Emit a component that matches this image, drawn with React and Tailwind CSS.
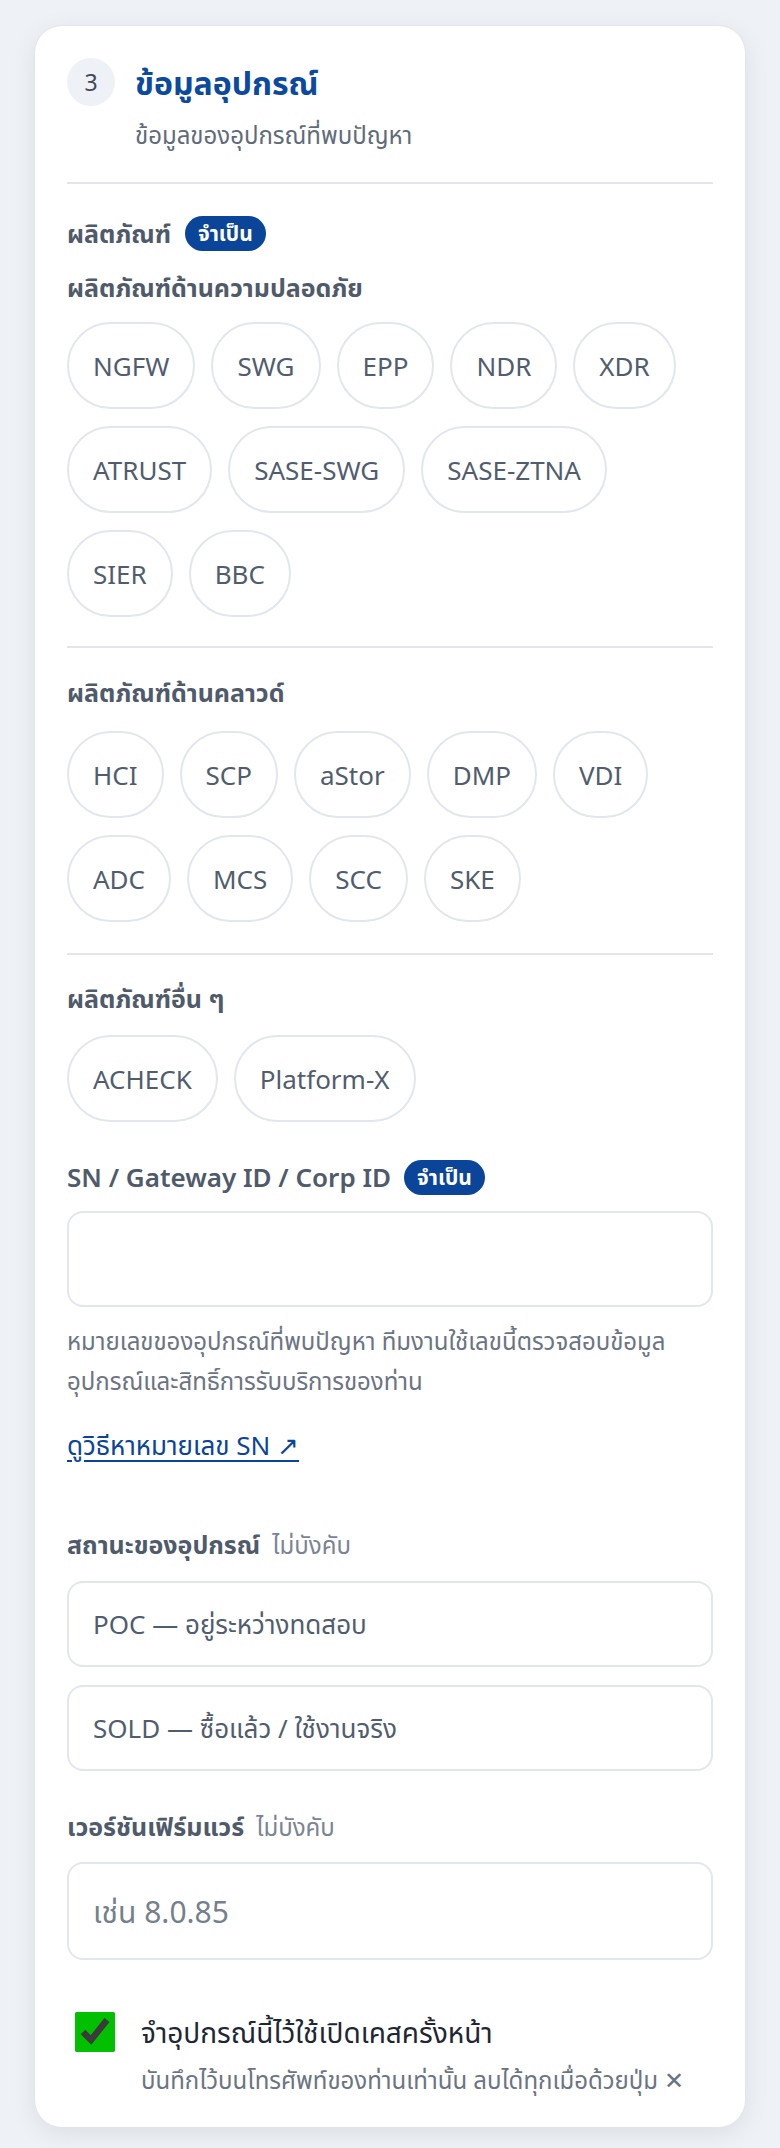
import { useState } from "react";

const SECURITY = ["NGFW", "SWG", "EPP", "NDR", "XDR", "ATRUST", "SASE-SWG", "SASE-ZTNA", "SIER", "BBC"];
const CLOUD = ["HCI", "SCP", "aStor", "DMP", "VDI", "ADC", "MCS", "SCC", "SKE"];
const OTHER = ["ACHECK", "Platform-X"];

function Badge() {
  return (
    <span className="inline-flex items-center h-[35px] px-[13px] rounded-full bg-[#0b4599] text-white text-[21px] font-bold leading-none">
      จำเป็น
    </span>
  );
}

function Chips({ items, selected, onToggle }) {
  return (
    <div className="flex flex-wrap gap-x-4 gap-y-[17px]">
      {items.map((name) => (
        <button
          key={name}
          onClick={() => onToggle(name)}
          className={
            "h-[87px] px-6 rounded-full border-2 text-[26px] leading-none " +
            (selected === name
              ? "border-[#0b4599] bg-[#eaf1fb] text-[#0b4599]"
              : "border-[#e2e7ee] bg-white text-[#515d6e]")
          }
        >
          {name}
        </button>
      ))}
    </div>
  );
}

export default function App() {
  const [product, setProduct] = useState(null);
  const [status, setStatus] = useState(null);
  const [remember, setRemember] = useState(true);

  return (
    <div
      className="min-h-screen bg-[#eef1f5] px-[34px] pt-[25px] pb-6"
      style={{ fontFamily: '"Noto Sans", "Noto Sans Thai", sans-serif' }}
    >
      <div className="bg-white rounded-[28px] border border-[#e1e5eb] shadow-[0_6px_24px_rgba(15,23,42,0.08)] px-8 pt-8 pb-[31px]">
        {/* Header */}
        <div className="flex gap-5">
          <div className="w-12 h-12 shrink-0 rounded-full bg-[#eef1f5] flex items-center justify-center text-[23px] text-[#3f4a5a]">
            3
          </div>
          <div>
            <h2 className="text-[32px] font-bold text-[#0b4a9e] leading-[44px] mt-[3px]">ข้อมูลอุปกรณ์</h2>
            <p className="text-[24px] text-[#5f6b7a] leading-[34px] mt-[13px]">ข้อมูลของอุปกรณ์ที่พบปัญหา</p>
          </div>
        </div>

        <div className="border-t-2 border-[#e2e6eb] mt-[30px] mb-[31px]" />

        {/* Products */}
        <div className="flex items-center gap-[14px]">
          <span className="text-[25px] font-bold text-[#4f5a6a] leading-[36px]">ผลิตภัณฑ์</span>
          <Badge />
        </div>
        <div className="text-[25px] font-bold text-[#4f5a6a] leading-[36px] mt-[18px] mb-[17px]">ผลิตภัณฑ์ด้านความปลอดภัย</div>
        <Chips items={SECURITY} selected={product} onToggle={setProduct} />

        <div className="border-t-2 border-[#e2e6eb] mt-[29px] mb-[26px]" />

        <div className="text-[25px] font-bold text-[#4f5a6a] leading-[36px] mb-[21px]">ผลิตภัณฑ์ด้านคลาวด์</div>
        <Chips items={CLOUD} selected={product} onToggle={setProduct} />

        <div className="border-t-2 border-[#e2e6eb] mt-[31px] mb-[25px]" />

        <div className="text-[25px] font-bold text-[#4f5a6a] leading-[36px] mb-[19px]">ผลิตภัณฑ์อื่น ๆ</div>
        <Chips items={OTHER} selected={product} onToggle={setProduct} />

        {/* SN */}
        <div className="flex items-center gap-[13px] mt-[37px]">
          <span className="text-[26px] font-semibold text-[#4f5a6a] leading-[36px]">SN / Gateway ID / Corp ID</span>
          <Badge />
        </div>
        <input className="mt-[16px] w-full h-[96px] rounded-2xl border-2 border-[#e2e7ee] px-6 text-[26px] outline-none" />
        <p className="mt-[14px] text-[24px] leading-[40px] text-[#6b7483] pr-10">
          หมายเลขของอุปกรณ์ที่พบปัญหา ทีมงานใช้เลขนี้ตรวจสอบข้อมูล อุปกรณ์และสิทธิ์การรับบริการของท่าน
        </p>
        <a href="#" className="inline-block mt-[25px] text-[26px] leading-[39px] text-[#0b4599] underline underline-offset-[5px]">
          ดูวิธีหาหมายเลข SN ↗
        </a>

        {/* Status */}
        <div className="flex items-baseline gap-3 mt-[61px]">
          <span className="text-[25px] font-bold text-[#4f5a6a] leading-[36px]">สถานะของอุปกรณ์</span>
          <span className="text-[24px] text-[#7a8494] leading-[36px]">ไม่บังคับ</span>
        </div>
        <div className="mt-[18px] flex flex-col gap-[18px]">
          {["POC — อยู่ระหว่างทดสอบ", "SOLD — ซื้อแล้ว / ใช้งานจริง"].map((s) => (
            <button
              key={s}
              onClick={() => setStatus(s)}
              className={
                "h-[86px] px-6 rounded-2xl border-2 text-left text-[26px] " +
                (status === s ? "border-[#0b4599] text-[#0b4599]" : "border-[#e2e7ee] text-[#515d6e]")
              }
            >
              {s}
            </button>
          ))}
        </div>

        {/* Firmware */}
        <div className="flex items-baseline gap-3 mt-[37px]">
          <span className="text-[25px] font-bold text-[#4f5a6a] leading-[36px]">เวอร์ชันเฟิร์มแวร์</span>
          <span className="text-[24px] text-[#7a8494] leading-[36px]">ไม่บังคับ</span>
        </div>
        <input
          placeholder="เช่น 8.0.85"
          className="mt-[17px] w-full h-[98px] rounded-2xl border-2 border-[#e2e7ee] px-6 text-[30px] outline-none placeholder:text-[#767f8c]"
        />

        {/* Remember */}
        <label className="flex gap-[26px] mt-[52px] pl-2 cursor-pointer">
          <input
            type="checkbox"
            checked={remember}
            onChange={() => setRemember(!remember)}
            className="w-10 h-10 shrink-0 accent-[#00c000] m-0"
          />
          <div>
            <div className="text-[28px] text-[#1f2733] leading-[40px]">จำอุปกรณ์นี้ไว้ใช้เปิดเคสครั้งหน้า</div>
            <div className="text-[24px] text-[#6b7483] leading-[32px] mt-[12px]">
              บันทึกไว้บนโทรศัพท์ของท่านเท่านั้น ลบได้ทุกเมื่อด้วยปุ่ม ✕
            </div>
          </div>
        </label>
      </div>
    </div>
  );
}
